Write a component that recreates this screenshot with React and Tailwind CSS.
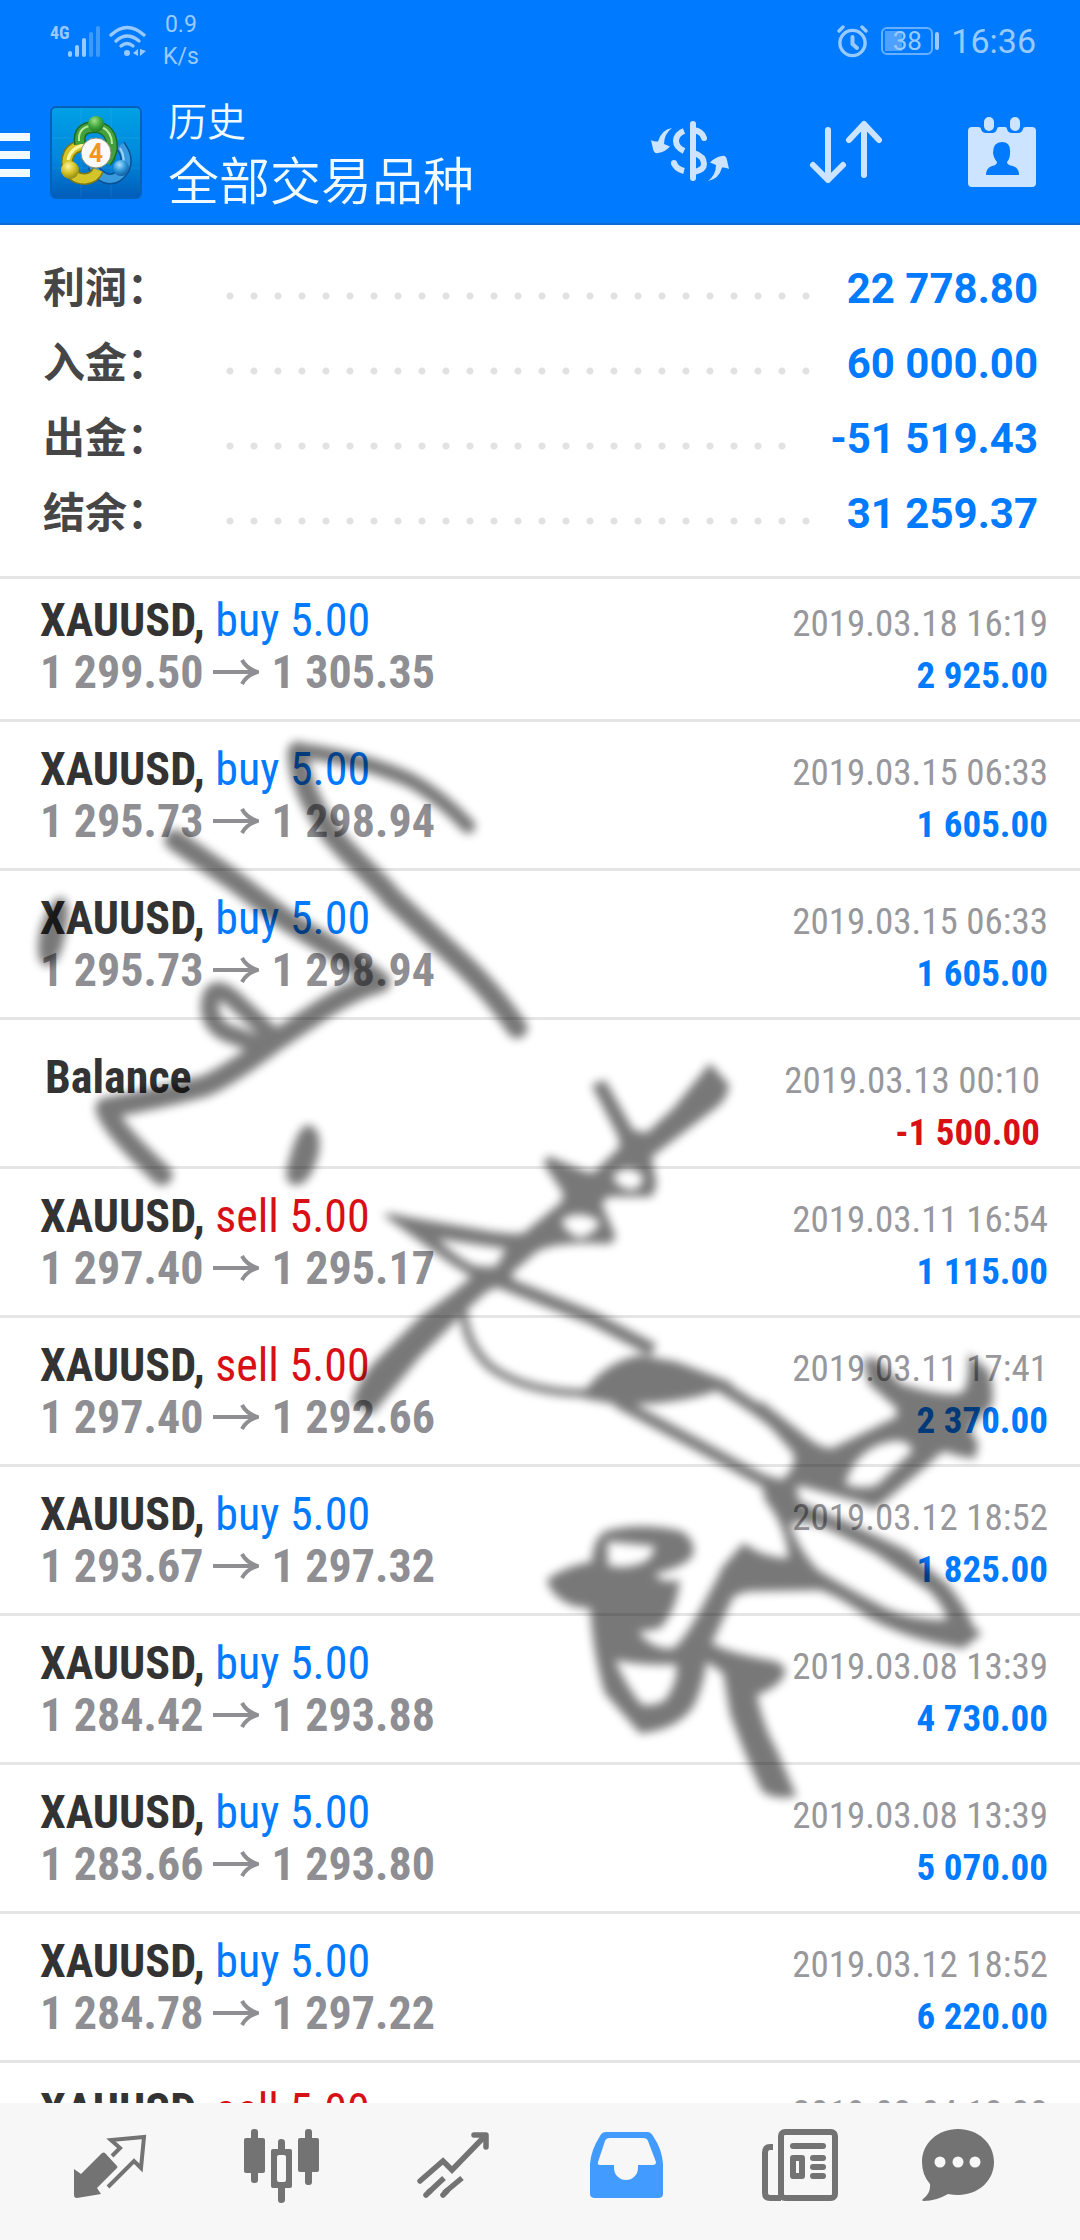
const CJK = "font-['Roboto','Noto_Sans_CJK_SC',sans-serif]"
const NARROW = "font-['Roboto_Condensed','Liberation_Sans_Narrow','Roboto',sans-serif]"

const SUMMARY = [
  { label: '利润', value: '22 778.80' },
  { label: '入金', value: '60 000.00' },
  { label: '出金', value: '-51 519.43' },
  { label: '结余', value: '31 259.37' },
]

const DEALS = [
  { side: 'buy', open: '1 299.50', close: '1 305.35', time: '2019.03.18 16:19', profit: '2 925.00' },
  { side: 'buy', open: '1 295.73', close: '1 298.94', time: '2019.03.15 06:33', profit: '1 605.00' },
  { side: 'buy', open: '1 295.73', close: '1 298.94', time: '2019.03.15 06:33', profit: '1 605.00' },
  { side: 'balance', time: '2019.03.13 00:10', profit: '-1 500.00' },
  { side: 'sell', open: '1 297.40', close: '1 295.17', time: '2019.03.11 16:54', profit: '1 115.00' },
  { side: 'sell', open: '1 297.40', close: '1 292.66', time: '2019.03.11 17:41', profit: '2 370.00' },
  { side: 'buy', open: '1 293.67', close: '1 297.32', time: '2019.03.12 18:52', profit: '1 825.00' },
  { side: 'buy', open: '1 284.42', close: '1 293.88', time: '2019.03.08 13:39', profit: '4 730.00' },
  { side: 'buy', open: '1 283.66', close: '1 293.80', time: '2019.03.08 13:39', profit: '5 070.00' },
  { side: 'buy', open: '1 284.78', close: '1 297.22', time: '2019.03.12 18:52', profit: '6 220.00' },
  { side: 'sell', open: '1 286.10', close: '1 284.30', time: '2019.03.04 18:38', profit: '900.00' },
]

const SIDE_STYLES = {
  buy: 'text-[#007aff]',
  sell: 'text-[#d80f14]',
}

const SWAP_ARROW = 'M22 12 Q14 18 14 28 L20 30.5 Q15 36 8 37 Q4 38 3 33 L1 24 Q4 26 8 25.5 Q11 14 22 12Z'

function StatusBar() {
  return (
    <div className="flex items-center justify-between pl-[51px] pr-11 h-[82px] text-[#99caff]">
      <div className="flex items-center">
        <svg width="50" height="32" viewBox="0 0 50 32" fill="currentColor" className="overflow-visible">
          <text x="-1" y="14" fontSize="18" fontWeight="700" className={NARROW}>4G</text>
          <rect x="17" y="26" width="4" height="6" rx="2" />
          <rect x="24" y="20" width="4" height="12" rx="2" />
          <rect x="31" y="13" width="4" height="19" rx="2" />
          <rect x="38" y="7" width="4" height="25" rx="2" opacity="0.4" />
          <rect x="45" y="1" width="4" height="31" rx="2" opacity="0.4" />
        </svg>
        <svg width="38" height="32" viewBox="0 0 38 32" className="ml-2" fill="none" stroke="currentColor" strokeWidth="3.4" strokeLinecap="round">
          <path d="M2 10 Q18 -5 35 10" />
          <path d="M7 16 Q18 6 30 16" />
          <path d="M12 21 Q18 16 24 21" />
          <circle cx="18" cy="28" r="3" fill="currentColor" stroke="none" />
          <path d="M29 24 V31 L24 28 Z M31 24 V31 L37 26 Z" fill="currentColor" stroke="none" />
        </svg>
        <div className="ml-4 text-[23px] leading-8 font-['Roboto',sans-serif] text-center">
          <p>0.9</p>
          <p>K/s</p>
        </div>
      </div>
      <div className="flex items-center">
        <svg width="32" height="34" viewBox="0 0 32 34" fill="none" stroke="currentColor" strokeWidth="3.4" strokeLinecap="round">
          <circle cx="15.5" cy="19" r="12.6" />
          <path d="M15.5 13 V20 L20 24" strokeWidth="4" strokeLinejoin="round" />
          <path d="M2 7 L6 3 M29 7 L25 3" />
        </svg>
        <div className="relative ml-3 flex h-7 w-[52px] items-center justify-center rounded-md border-2 border-[#66b0ff]">
          <span className="absolute left-0.5 top-0.5 h-5 w-[17px] bg-white/30"></span>
          <span className="relative text-[26px] leading-none font-['Roboto',sans-serif]">38</span>
        </div>
        <span className="ml-0.5 h-[18px] w-1 rounded-full bg-[#99caff]"></span>
        <span className="ml-3 text-[34px] leading-none font-['Roboto',sans-serif]">16:36</span>
      </div>
    </div>
  )
}

function AppLogo() {
  return (
    <svg width="92" height="94" viewBox="0 0 92 94" className="ml-5 mb-0.5 shrink-0" fill="none">
      <defs>
        <linearGradient id="tile" x1="0" y1="0" x2="0" y2="1">
          <stop offset="0" stopColor="#00a0e6" />
          <stop offset="0.55" stopColor="#0088dc" />
          <stop offset="1" stopColor="#005cba" />
        </linearGradient>
        <radialGradient id="green" cx="0.4" cy="0.3" r="0.8">
          <stop offset="0" stopColor="#9fdf8a" />
          <stop offset="0.5" stopColor="#3fa63a" />
          <stop offset="1" stopColor="#1c6b24" />
        </radialGradient>
        <radialGradient id="yellow" cx="0.4" cy="0.3" r="0.8">
          <stop offset="0" stopColor="#fdf59a" />
          <stop offset="0.5" stopColor="#cfc022" />
          <stop offset="1" stopColor="#7d7814" />
        </radialGradient>
        <radialGradient id="blue" cx="0.4" cy="0.3" r="0.8">
          <stop offset="0" stopColor="#a8e0ff" />
          <stop offset="0.5" stopColor="#2b93d6" />
          <stop offset="1" stopColor="#0b4f94" />
        </radialGradient>
      </defs>
      <rect x="1" y="1" width="90" height="91" rx="5" fill="url(#tile)" stroke="#0661bd" strokeWidth="2" />
      <path d="M31 2 V91 M61 2 V91 M2 32 H90 M2 62 H90" stroke="#fff" strokeOpacity="0.08" />
      <path d="M70 39 Q80 52 74 64 Q66 76 55 72 Q46 68 43 60" stroke="#0b4f94" strokeWidth="11" />
      <path d="M70 39 Q80 52 74 64 Q66 76 55 72 Q46 68 43 60" stroke="#3a9ade" strokeWidth="8" />
      <path d="M70 42 Q76 52 72 62" stroke="#9bd6fa" strokeWidth="2" />
      <path d="M34 39 Q18 41 17 56 Q20 73 35 73 Q45 72 48 64" stroke="#7d7814" strokeWidth="12" />
      <path d="M34 39 Q18 41 17 56 Q20 73 35 73 Q45 72 48 64" stroke="#d3c42a" strokeWidth="9" />
      <path d="M34 39 Q20 42 18 54" stroke="#fbf7a0" strokeWidth="3" />
      <path d="M30 38 Q27 21 45 21 Q62 22 62 42 Q61 50 56 56" stroke="#1c6b24" strokeWidth="12" />
      <path d="M30 38 Q27 21 45 21 Q62 22 62 42 Q61 50 56 56" stroke="#43a03c" strokeWidth="9" />
      <path d="M29 35 Q28 22 40 20 M52 21 Q62 26 62 38" stroke="#b5eb9f" strokeWidth="2" />
      <circle cx="46" cy="18" r="8" fill="url(#green)" />
      <circle cx="20" cy="64" r="9" fill="url(#yellow)" />
      <circle cx="71" cy="62" r="8" fill="url(#blue)" />
      <circle cx="46" cy="47" r="15" fill="#fafafa" stroke="#8d8f7a" strokeWidth="1" />
      <text x="46" y="56" textAnchor="middle" fontSize="25" fontWeight="700" fill="#f7941d" className="font-['Roboto',sans-serif]">4</text>
    </svg>
  )
}

function Header() {
  return (
    <header className="bg-[#007aff] border-b-2 border-[#0d6bd6] shrink-0">
      <StatusBar />
      <div className="flex items-center h-[141px] pt-0.5">
        <button type="button" aria-label="Menu" className="w-[30px] flex flex-col gap-2.5 pt-0.5">
          <span className="h-2 bg-[#f0faff]"></span>
          <span className="h-2 bg-[#f0faff]"></span>
          <span className="h-2 bg-[#f0faff]"></span>
        </button>
        <AppLogo />
        <div className={`ml-[26px] flex-1 pt-0.5 text-[#f0faff] whitespace-nowrap font-[350] ${CJK}`}>
          <p className="text-[39px] leading-[56px]">历史</p>
          <h1 className="text-[51px] leading-[64px]">全部交易品种</h1>
        </div>
        <button type="button" aria-label="Symbol" className="flex w-[156px] justify-center pb-1 text-[#cce4ff]">
          <svg width="80" height="72" viewBox="0 0 80 72" fill="none" stroke="currentColor" strokeWidth="6">
            <path d="M43 8 V62" strokeLinecap="round" />
            <path d="M34 15 Q26 18 26 25 Q26 31 34 35" />
            <path d="M24 47 Q26 53 34 55" />
            <circle cx="24" cy="47" r="3" fill="currentColor" stroke="none" />
            <path d="M43 14 Q52 15 54 22 M44 37 Q54 40 54 48 Q54 54 44 56" strokeLinecap="round" />
            <path d={SWAP_ARROW} fill="currentColor" stroke="none" />
            <path d={SWAP_ARROW} fill="currentColor" stroke="none" transform="rotate(180 40 38.5)" />
          </svg>
        </button>
        <button type="button" aria-label="Sort" className="flex w-[156px] justify-center pb-1 text-[#cce4ff]">
          <svg width="80" height="72" viewBox="0 0 80 72" fill="none" stroke="currentColor" strokeWidth="6" strokeLinecap="round" strokeLinejoin="round">
            <path d="M22 14 V64 M7 49 L22 64 L37 49" />
            <path d="M58 59 V8 M43 24 L58 8 L73 24" />
          </svg>
        </button>
        <button type="button" aria-label="Period" className="flex w-[156px] justify-center pb-1 text-[#cce4ff]">
          <svg width="80" height="72" viewBox="0 0 80 72" fill="currentColor">
            <path
              fillRule="evenodd"
              d="M10 11 H16 Q19 11 19 13 Q20 17 24 17 H30 Q34 17 35 13 Q35 11 37 11 H43 Q45 11 45 13 Q46 17 50 17 H56 Q60 17 61 13 Q61 11 64 11 H70 Q74 11 74 15 V67 Q74 71 70 71 H10 Q6 71 6 67 V15 Q6 11 10 11Z M40 26 Q49 26 48 37 Q48 43 45 46 Q45 49 51 50 Q57 52 57 59 H24 Q24 52 30 50 Q35 49 35 46 Q32 43 31 37 Q31 26 40 26Z"
            />
            <rect x="22" y="1" width="10" height="14" rx="5" />
            <rect x="48" y="1" width="10" height="14" rx="5" />
          </svg>
        </button>
      </div>
    </header>
  )
}

function Summary() {
  return (
    <dl className={`shrink-0 pt-[26px] pb-[25px] pl-[43px] pr-[42px] border-b-3 border-[#e5e5e5] text-[42px] leading-[75px] ${CJK}`}>
      {SUMMARY.map(row => (
        <div key={row.label} className="flex">
          <dt className="w-[175px] font-bold text-[#464646]">{row.label}：</dt>
          <dd className="flex flex-1 font-bold text-[#007aff] whitespace-nowrap">
            <span className="mr-[30px] mt-[33px] h-6 flex-1 bg-repeat-x bg-[length:24px_24px] bg-[radial-gradient(circle,#e2e2e2_3px,transparent_4px)]"></span>
            {row.value}
          </dd>
        </div>
      ))}
    </dl>
  )
}

function Deal({ deal, first }) {
  const isBalance = deal.side === 'balance'
  const padding = isBalance ? 'pt-[31px] pb-[7px] pl-[45px] pr-10' : first ? 'pt-[15px] pb-[17px] pl-10 pr-8' : 'pt-[21px] pb-[17px] pl-10 pr-8'
  return (
    <li className={`flex items-baseline justify-between border-b-3 border-[#e5e5e5] leading-[52px] whitespace-nowrap ${padding}`}>
      <div className="text-[46px]">
        {isBalance ? (
          <p className="font-bold text-[#333]">Balance</p>
        ) : (
          <>
            <p>
              <span className="font-bold text-[#333]">XAUUSD,</span>{' '}
              <span className={SIDE_STYLES[deal.side]}>{deal.side} 5.00</span>
            </p>
            <p className="flex items-center font-bold text-[#8e8e93]">
              {deal.open}
              <svg width="46" height="28" viewBox="0 0 46 28" className="ml-2.5 mr-3" fill="none" stroke="currentColor" strokeWidth="4">
                <path d="M0 14 H44 M29 2 Q33 10 44 14 Q33 18 29 26" />
              </svg>
              {deal.close}
            </p>
          </>
        )}
      </div>
      <div className="text-right text-[37px]">
        <p className="text-[#98989c]">{deal.time}</p>
        <p className={`font-bold ${deal.profit.startsWith('-') ? 'text-[#d80f14]' : 'text-[#007aff]'}`}>{deal.profit}</p>
      </div>
    </li>
  )
}

// Translucent handwritten signature laid over the list
function Signature() {
  return (
    <svg viewBox="0 0 1080 2240" className="pointer-events-none absolute inset-x-0 top-0 w-full" aria-hidden="true">
      <defs>
        <filter id="soft" x="-5%" y="-5%" width="110%" height="110%">
          <feGaussianBlur stdDeviation="4.6" />
        </filter>
      </defs>
      <g opacity="0.53" filter="url(#soft)">
        <g fill="none" stroke="#000" strokeLinecap="round" strokeLinejoin="round" strokeWidth="21">
          <path strokeWidth="15" d="M468 826 Q440 796 410 780 Q360 758 298 750" />
          <path d="M298 752 Q298 785 329 831 C350 858 375 876 392 898 L464 965 Q495 995 517 1028" />
          <path d="M175 840 L232 879 L286 920 L343 955 L380 982 Q350 990 311 1017 L275 1041 Q230 1075 205 1086 Q160 1098 106 1108 Q110 1127 162 1175" />
          <path strokeWidth="18" d="M275 1038 L232 998 Q212 982 210 1003 Q208 1022 225 1032 L262 1046" />
          <path strokeWidth="12" d="M722 1387 Q765 1412 790 1437 M620 1403 L700 1446 L780 1490" />
        </g>
        <path d="M62 897 Q72 903 66 930 Q60 967 46 966 Q34 962 40 930 Q50 898 62 897Z" />
        <path d="M308 1125 Q322 1128 319 1152 Q310 1187 294 1185 Q282 1182 289 1160 Q298 1126 308 1125Z" />
        <g transform="translate(340 1050) scale(0.3333)">
          <path
            fillRule="evenodd"
            d="M1110 40 L1168 105 Q1160 150 1130 172 L935 320 L950 405 L935 440 H805 L785 460 L828 560 L810 582 Q650 572 590 605 L515 670 L520 690 L440 725 L385 775 L345 815 L240 920 L95 1095 L35 1060 Q50 1000 100 940 L240 800 L335 730 L395 680 L330 640 L130 495 Q140 485 200 500 L400 535 Q500 555 550 550 L665 455 L670 430 L610 340 L625 318 L740 365 L760 368 L840 290 L835 260 L755 105 L795 90 L880 240 L920 248 L1000 175Z M820 375 Q870 338 908 378 Q912 408 880 420 Q825 415 820 375Z M665 510 Q720 475 780 515 Q765 553 720 564 Q675 550 665 510Z M295 566 L400 582 L498 596 L470 648 Q440 653 400 646 Q340 615 295 566Z"
          />
          <path d="M740 1015 Q800 935 900 915 L1010 935 L1180 1000 Q1100 1045 950 1060 L840 1065 L730 1045Z" />
          <g fill="none" stroke="#000">
            <path strokeWidth="24" d="M370 780 Q375 880 450 950 Q560 1030 750 1030" />
            <path strokeWidth="40" d="M470 690 L760 806 L940 900" />
          </g>
        </g>
        <g transform="translate(740 1340) scale(0.3333)">
          <path
            fillRule="evenodd"
            d="M60 180 L200 290 Q240 325 275 325 L470 230 L470 205 L385 130 L370 55 L410 55 L480 130 Q600 170 660 160 Q690 150 685 40 L745 90 Q765 140 755 200 Q700 250 690 270 L715 310 L705 355 Q650 350 620 335 Q600 335 580 360 L420 495 Q400 510 370 490 L190 440 L110 435 Q175 380 160 340 L60 225Z M315 432 Q350 315 470 302 Q520 308 515 335 L410 435 Q360 450 315 432Z"
          />
          <path
            fillRule="evenodd"
            d="M60 400 L165 430 L180 485 L330 550 L500 630 L620 730 Q680 800 700 860 L725 880 L670 925 Q500 900 380 830 Q300 770 240 750 L-20 755 L-60 690 L10 610 Q60 650 145 655 Q140 560 75 480Z M150 550 Q200 540 265 568 L405 640 L570 755 Q620 810 620 840 Q520 840 445 808 Q295 730 232 688 Q170 620 150 550Z"
          />
        </g>
        <g transform="translate(530 1500) scale(0.3333)">
          <path
            fillRule="evenodd"
            d="M640 130 L700 165 L700 265 Q650 270 610 290 L545 430 Q600 460 720 480 Q770 490 765 520 Q750 560 680 585 Q700 680 740 750 L800 890 Q720 900 695 870 Q650 780 600 640 L580 520 L530 485 Q520 560 490 620 Q440 690 330 700 L225 580 Q190 470 180 325 L140 320 Q70 300 50 240 Q100 200 185 185 Q190 110 230 92 Q330 66 450 92 Q495 115 490 160 Q480 195 375 222 Q390 250 450 240 Q440 330 390 385 L325 396 Q370 450 430 445 Q460 420 500 350 L580 200Z M232 124 L375 138 Q365 184 325 192 Q280 208 234 196Z M255 480 Q350 498 438 492 Q448 540 405 600 Q372 620 335 614 Q290 560 255 480Z"
          />
        </g>
      </g>
    </svg>
  )
}

const TABS = [
  {
    label: 'Quotes',
    icon: (
      <>
        <path d="M12 49 L19 54 L40 33 Q42 32 43 33 L55 46 Q56 47 55 48 L35 68 L39 74 L15 78 Q12 78 12 75Z" />
        <path d="M50 36 L58 28 L49 20 L82 17 L79 48 L72 41 L46 67" fill="none" stroke="currentColor" strokeWidth="4" />
      </>
    ),
  },
  {
    label: 'Charts',
    icon: (
      <>
        <rect x="10" y="18" width="21" height="35" rx="2" />
        <rect x="17" y="9" width="7" height="54" rx="3" />
        <path fillRule="evenodd" d="M39 29 H56 Q58 29 58 31 V66 Q58 68 56 68 H39 Q37 68 37 66 V31 Q37 29 39 29Z M45 35 Q43 35 43 37 V60 Q43 62 45 62 H50 Q52 62 52 60 V37 Q52 35 50 35Z" />
        <path d="M44 30 V22 Q44 19 47 19 Q51 19 51 22 V30Z M44 67 V80 Q44 83 47 83 Q51 83 51 80 V67Z" />
        <rect x="64" y="18" width="21" height="34" rx="2" />
        <rect x="71" y="9" width="7" height="56" rx="3" />
      </>
    ),
  },
  {
    label: 'Trade',
    icon: (
      <g fill="none" stroke="currentColor" strokeWidth="5.5">
        <path d="M14 61 L37 41 L46 50 L79 16" strokeLinecap="round" />
        <path d="M68 15 H80 V27" strokeLinecap="round" strokeLinejoin="round" />
        <path d="M38 58 L22 73 M56 58 L38 73" />
        <path d="M20 75 L24 71 M37 75 L41 71" strokeLinecap="round" />
      </g>
    ),
  },
  {
    label: 'History',
    active: true,
    icon: (
      <path
        fillRule="evenodd"
        d="M12 44 Q13 30 22 16 Q24 12 28 12 H69 Q73 12 75 16 Q84 29 85 44 V74 Q85 78 80 78 H17 Q12 78 12 74Z M27 21 Q28 18 32 18 H65 Q69 18 70 21 L78 42 Q78 45 75 45 H60 V48 A12 12 0 0 1 36 48 V45 H22 Q19 45 20 42Z"
      />
    ),
  },
  {
    label: 'News',
    icon: (
      <>
        <rect x="31" y="12" width="54" height="66" rx="4" fill="none" stroke="currentColor" strokeWidth="6" />
        <path d="M23 27 H20 Q15 27 15 33 V73 Q15 78 20 78 H31" fill="none" stroke="currentColor" strokeWidth="6" />
        <rect x="40" y="23" width="36" height="6" rx="3" />
        <rect x="43" y="38" width="9" height="18" fill="none" stroke="currentColor" strokeWidth="6" strokeLinejoin="round" />
        <rect x="60" y="35" width="16" height="6" rx="3" />
        <rect x="60" y="44" width="16" height="6" rx="3" />
        <rect x="60" y="53" width="16" height="6" rx="3" />
      </>
    ),
  },
  {
    label: 'Messages',
    icon: (
      <>
        <path d="M36 9 C56 9 72 23 72 42 C72 61 56 75 36 75 Q31 75 26 74 Q14 81 2 81 Q-1 81 1 79 Q9 73 8 64 Q0 55 0 42 C0 23 16 9 36 9Z" />
        <circle cx="18" cy="42" r="5.5" fill="#f7f7f7" />
        <circle cx="36" cy="42" r="5.5" fill="#f7f7f7" />
        <circle cx="53" cy="42" r="5.5" fill="#f7f7f7" />
      </>
    ),
  },
]

function TabBar() {
  return (
    <nav className="shrink-0 grid grid-cols-6 px-6 pt-[17px] pb-6 bg-[#f7f7f7]">
      {TABS.map(tab => (
        <button
          key={tab.label}
          type="button"
          aria-label={tab.label}
          className={`flex justify-center ${tab.active ? 'text-[#429cff]' : 'text-[#737373]'}`}
        >
          <svg width="96" height="96" viewBox="0 0 96 96" fill="currentColor">{tab.icon}</svg>
        </button>
      ))}
    </nav>
  )
}

export default function App() {
  return (
    <div className="relative flex h-screen flex-col overflow-hidden bg-white">
      <Header />
      <Summary />
      <ul className={`flex-1 min-h-0 overflow-hidden ${NARROW}`}>
        {DEALS.map((deal, i) => (
          <Deal key={i} deal={deal} first={i === 0} />
        ))}
      </ul>
      <TabBar />
      <Signature />
    </div>
  )
}
